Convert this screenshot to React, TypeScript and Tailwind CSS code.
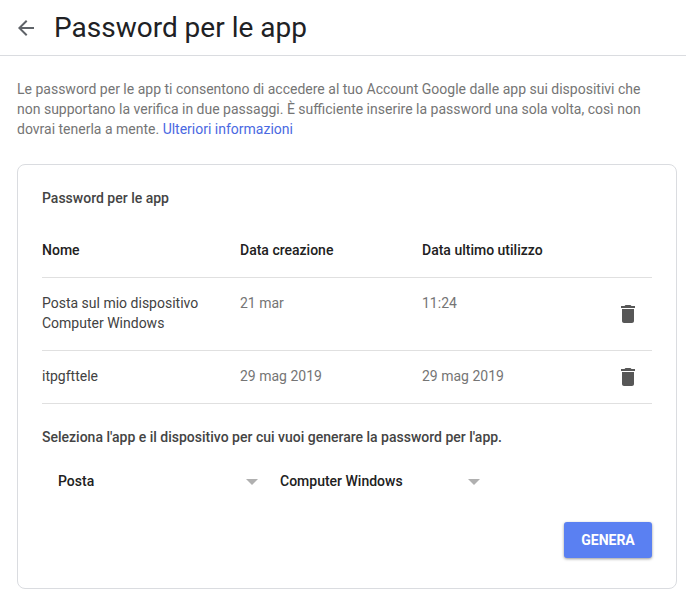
import { useState } from 'react'

type AppPassword = {
  name: string
  created: string
  lastUsed: string
}

const INITIAL_PASSWORDS: AppPassword[] = [
  { name: 'Posta sul mio dispositivo Computer Windows', created: '21 mar', lastUsed: '11:24' },
  { name: 'itpgfttele', created: '29 mag 2019', lastUsed: '29 mag 2019' },
]

const APPS = ['Posta', 'Calendario', 'Contatti', 'YouTube']
const DEVICES = ['Computer Windows', 'iPhone', 'iPad', 'BlackBerry', 'Mac']

function BackIcon() {
  return (
    <svg viewBox="0 0 24 24" className="size-6 fill-[#5f6368]" aria-hidden="true">
      <path d="M20 11H7.83l5.59-5.59L12 4l-8 8 8 8 1.41-1.41L7.83 13H20v-2z" />
    </svg>
  )
}

function TrashIcon() {
  return (
    <svg viewBox="0 0 24 24" className="size-6 fill-[#575757]" aria-hidden="true">
      <path d="M6 19c0 1.1.9 2 2 2h8c1.1 0 2-.9 2-2V7H6v12zM19 4h-3.5l-1-1h-5l-1 1H5v2h14V4z" />
    </svg>
  )
}

type PickerProps = {
  label: string
  value: string
  options: string[]
  onChange: (value: string) => void
}

function Picker({ label, value, options, onChange }: PickerProps) {
  return (
    <div className="relative w-[206px]">
      <select
        aria-label={label}
        value={value}
        onChange={(e) => onChange(e.target.value)}
        className="w-full appearance-none bg-transparent pr-8 h-8 font-medium text-[#212121] focus:outline-none"
      >
        {options.map((option) => (
          <option key={option} value={option}>
            {option}
          </option>
        ))}
      </select>
      <svg
        viewBox="0 0 12 6"
        className="pointer-events-none absolute right-[6px] top-[14px] h-[6px] w-[12px] fill-[#b0b0b0]"
        aria-hidden="true"
      >
        <path d="M0 0h12L6 6z" />
      </svg>
    </div>
  )
}

export default function App() {
  const [passwords, setPasswords] = useState(INITIAL_PASSWORDS)
  const [app, setApp] = useState(APPS[0])
  const [device, setDevice] = useState(DEVICES[0])

  const remove = (name: string) => {
    setPasswords(passwords.filter((p) => p.name !== name))
  }

  return (
    <div className="bg-white font-[Roboto,sans-serif] text-sm leading-5 text-[#212121]">
      <header className="flex h-14 items-center gap-4 border-b border-[#dadce0] pl-[14px]">
        <button type="button" aria-label="Indietro">
          <BackIcon />
        </button>
        <h1 className="text-[28px] leading-9 text-[#202124]">Password per le app</h1>
      </header>

      <main className="pt-[23px] pr-[9px] pb-[9px] pl-[17px]">
        <p className="pr-3 text-[#757575]">
          Le password per le app ti consentono di accedere al tuo Account Google dalle app sui dispositivi che non
          supportano la verifica in due passaggi. È sufficiente inserire la password una sola volta, così non dovrai
          tenerla a mente.{' '}
          <a href="#info" className="text-[#4a69e2]">
            Ulteriori informazioni
          </a>
        </p>

        <section className="mt-[25px] rounded-lg border border-[#dadce0] px-6 pt-[23px] pb-[30px]">
          <h2 className="font-medium text-[#444444]">Password per le app</h2>

          <table className="mt-4 w-full table-fixed text-left">
            <thead>
              <tr className="border-b border-[#e0e0e0]">
                <th className="w-[198px] pt-4 pb-[17px] font-medium">Nome</th>
                <th className="w-[182px] pt-4 pb-[17px] font-medium">Data creazione</th>
                <th className="pt-4 pb-[17px] font-medium">Data ultimo utilizzo</th>
                <td className="w-12" />
              </tr>
            </thead>
            <tbody>
              {passwords.map((p) => (
                <tr key={p.name} className="border-b border-[#e0e0e0]">
                  <td className="pt-[15px] pr-4 pb-[17px] align-top text-[#424242]">{p.name}</td>
                  <td className="pt-[15px] pb-[17px] align-top text-[#757575]">{p.created}</td>
                  <td className="pt-[15px] pb-[17px] align-top text-[#757575]">{p.lastUsed}</td>
                  <td className="pl-3 align-middle">
                    <button
                      type="button"
                      aria-label={`Rimuovi ${p.name}`}
                      onClick={() => remove(p.name)}
                      className="block"
                    >
                      <TrashIcon />
                    </button>
                  </td>
                </tr>
              ))}
            </tbody>
          </table>

          <p className="mt-[23px] font-medium text-[#444444]">
            Seleziona l'app e il dispositivo per cui vuoi generare la password per l'app.
          </p>

          <div className="mt-[18px] flex gap-4 pl-4">
            <Picker label="Seleziona app" value={app} options={APPS} onChange={setApp} />
            <Picker label="Seleziona dispositivo" value={device} options={DEVICES} onChange={setDevice} />
          </div>

          <div className="mt-[25px] flex justify-end">
            <button
              type="button"
              className="h-9 min-w-[88px] rounded-[3px] bg-[#5a80f2] px-4 font-bold text-white shadow-[0_1px_3px_rgba(0,0,0,0.4)]"
            >
              GENERA
            </button>
          </div>
        </section>
      </main>
    </div>
  )
}
